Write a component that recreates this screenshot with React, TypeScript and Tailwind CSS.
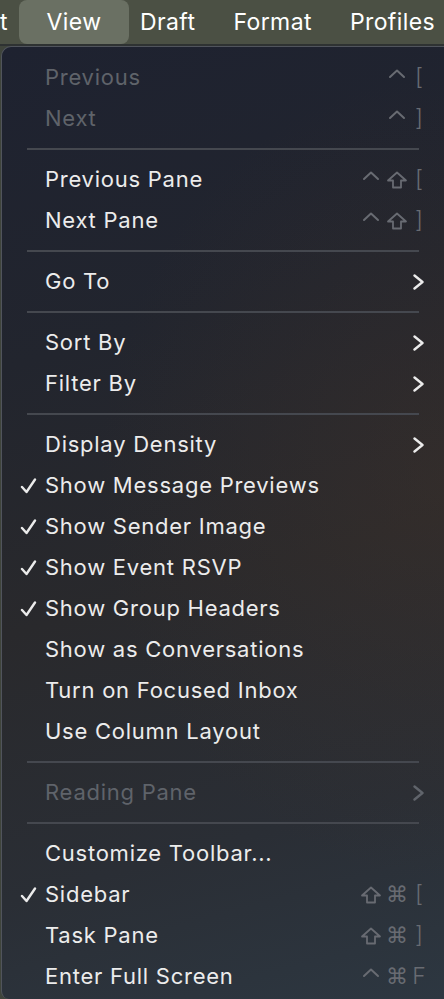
import { ReactNode } from 'react';

type Item =
	| { kind: 'sep' }
	| {
			kind: 'item';
			label: string;
			disabled?: boolean;
			checked?: boolean;
			submenu?: boolean;
			mods?: string[];
			keyName?: string;
	  };

const items: Item[] = [
	{ kind: 'item', label: 'Previous', disabled: true, mods: ['ctrl'], keyName: '[' },
	{ kind: 'item', label: 'Next', disabled: true, mods: ['ctrl'], keyName: ']' },
	{ kind: 'sep' },
	{ kind: 'item', label: 'Previous Pane', mods: ['ctrl', 'shift'], keyName: '[' },
	{ kind: 'item', label: 'Next Pane', mods: ['ctrl', 'shift'], keyName: ']' },
	{ kind: 'sep' },
	{ kind: 'item', label: 'Go To', submenu: true },
	{ kind: 'sep' },
	{ kind: 'item', label: 'Sort By', submenu: true },
	{ kind: 'item', label: 'Filter By', submenu: true },
	{ kind: 'sep' },
	{ kind: 'item', label: 'Display Density', submenu: true },
	{ kind: 'item', label: 'Show Message Previews', checked: true },
	{ kind: 'item', label: 'Show Sender Image', checked: true },
	{ kind: 'item', label: 'Show Event RSVP', checked: true },
	{ kind: 'item', label: 'Show Group Headers', checked: true },
	{ kind: 'item', label: 'Show as Conversations' },
	{ kind: 'item', label: 'Turn on Focused Inbox' },
	{ kind: 'item', label: 'Use Column Layout' },
	{ kind: 'sep' },
	{ kind: 'item', label: 'Reading Pane', disabled: true, submenu: true },
	{ kind: 'sep' },
	{ kind: 'item', label: 'Customize Toolbar...' },
	{ kind: 'item', label: 'Sidebar', checked: true, mods: ['shift', 'cmd'], keyName: '[' },
	{ kind: 'item', label: 'Task Pane', mods: ['shift', 'cmd'], keyName: ']' },
	{ kind: 'item', label: 'Enter Full Screen', mods: ['ctrl', 'cmd'], keyName: 'F' }
];

function Check() {
	return (
		<svg width="17" height="16" viewBox="0 0 17 16" className="text-[#ebebeb]">
			<path
				d="M2 9 L6.5 14 L15 1.5"
				fill="none"
				stroke="currentColor"
				strokeWidth="2.4"
				strokeLinecap="round"
				strokeLinejoin="round"
			/>
		</svg>
	);
}

function Chevron({ dim }: { dim?: boolean }) {
	return (
		<svg
			width="16"
			height="16"
			viewBox="0 0 16 16"
			className={dim ? 'text-[#60646b]' : 'text-[#ebebeb]'}
		>
			<path
				d="M2.5 1.5 L10.5 8 L2.5 14.5"
				fill="none"
				stroke="currentColor"
				strokeWidth="2.4"
				strokeLinecap="round"
				strokeLinejoin="round"
			/>
		</svg>
	);
}

function Modifier({ name }: { name: string }) {
	if (name === 'ctrl')
		return (
			<svg width="18" height="18" viewBox="0 0 18 18">
				<path
					d="M2 8 L9 1.5 L16 8"
					fill="none"
					stroke="currentColor"
					strokeWidth="2"
					strokeLinecap="round"
					strokeLinejoin="round"
				/>
			</svg>
		);
	if (name === 'shift')
		return (
			<svg width="22" height="18" viewBox="0 0 22 18">
				<path
					d="M11 1.5 L20 9.5 L15 9.5 L15 16.5 L7 16.5 L7 9.5 L2 9.5 Z"
					fill="none"
					stroke="currentColor"
					strokeWidth="1.8"
					strokeLinejoin="round"
				/>
			</svg>
		);
	return <span className="font-['DejaVu_Sans',sans-serif] text-[22px] leading-none">⌘</span>;
}

function Shortcut({ mods, keyName }: { mods: string[]; keyName: string }) {
	return (
		<div className="flex items-center text-[#686b72]">
			{mods.map((m, i) => (
				<span key={i} className="w-[26px] h-[24px] flex items-center justify-center">
					<Modifier name={m} />
				</span>
			))}
			<span className="w-[18px] text-center font-['Inter',sans-serif] font-light text-[23px]">
				{keyName}
			</span>
		</div>
	);
}

function Row({ item }: { item: Exclude<Item, { kind: 'sep' }> }) {
	let right: ReactNode = null;
	if (item.submenu) right = <Chevron dim={item.disabled} />;
	else if (item.mods && item.keyName) right = <Shortcut mods={item.mods} keyName={item.keyName} />;

	return (
		<div className="h-[41px] flex items-center pl-[18px] pr-[16px]">
			<div className="w-[25px] flex items-center">{item.checked && <Check />}</div>
			<p
				className={`flex-1 text-[22px] tracking-[0.75px] ${
					item.disabled ? 'text-[#5f636a]' : 'text-[#ececec]'
				}`}
			>
				{item.label}
			</p>
			{right}
		</div>
	);
}

export default function App() {
	return (
		<div className="w-[444px] h-[999px] overflow-hidden bg-[#3f443b] font-['Inter',sans-serif] flex flex-col">
			<div className="h-[44px] shrink-0 bg-[#4b5044] flex items-center text-white text-[23px] tracking-[0.4px]">
				<span className="w-[19px]">t</span>
				<span className="h-[44px] w-[110px] rounded-lg bg-[#6a7063] flex items-center justify-center">
					View
				</span>
				<span className="ml-[11px]">Draft</span>
				<span className="ml-[38px]">Format</span>
				<span className="ml-[38px]">Profiles</span>
			</div>
			<div className="h-[2px] shrink-0 bg-[#2e3232]" />
			<div className="flex-1 ml-[1px] rounded-tl-[10px] rounded-bl-[8px] border-l border-t border-[#50545c] bg-[linear-gradient(165deg,#1e2230_0%,#22252e_30%,#29292c_55%,#2a2e35_80%,#2d3741_100%)] pt-[10px]">
				<div className="bg-[radial-gradient(ellipse_at_100%_45%,rgba(70,52,40,0.35),transparent_55%)]">
					{items.map((item, i) =>
						item.kind === 'sep' ? (
							<div key={i} className="h-[20px] flex items-center px-[25px]">
								<div className="h-[2px] w-full bg-[#45484f]" />
							</div>
						) : (
							<Row key={i} item={item} />
						)
					)}
				</div>
			</div>
		</div>
	);
}
